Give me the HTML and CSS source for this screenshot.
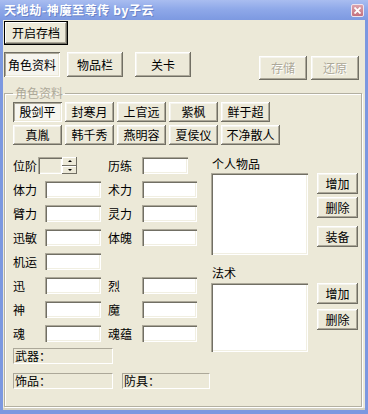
FILE: index.html
```html
<!DOCTYPE html>
<html lang="zh-CN">
<head>
  <meta charset="UTF-8">
  <title>天地劫-神魔至尊传 by子云</title>
  <link rel="stylesheet" href="styles.css">
</head>
<body>

<div class="window">
  <div class="titlebar">
    <span class="title">天地劫-神魔至尊传 by子云</span>
    <span class="close">
      <svg width="7" height="7" viewBox="0 0 7 7"><path d="M0.5 0.5 L6.5 6.5 M6.5 0.5 L0.5 6.5" stroke="#fff" stroke-width="1.8"/></svg>
    </span>
  </div>

  <div class="client">
    <div class="top-row">
      <button class="btn default open-btn">开启存档</button>
    </div>

    <div class="tab-row">
      <div class="tabs">
        <button class="btn tab checked">角色资料</button>
        <button class="btn tab">物品栏</button>
        <button class="btn tab tab-last">关卡</button>
      </div>
      <div class="actions">
        <button class="btn act" disabled>存储</button>
        <button class="btn act" disabled>还原</button>
      </div>
    </div>

    <fieldset class="group">
      <legend>角色资料</legend>

      <div class="chars">
        <div class="char-row">
          <button class="btn char checked">殷剑平</button>
          <button class="btn char">封寒月</button>
          <button class="btn char">上官远</button>
          <button class="btn char">紫枫</button>
          <button class="btn char">鲜于超</button>
        </div>
        <div class="char-row">
          <button class="btn char">真胤</button>
          <button class="btn char">韩千秀</button>
          <button class="btn char">燕明容</button>
          <button class="btn char">夏侯仪</button>
          <button class="btn char wide">不净散人</button>
        </div>
      </div>

      <div class="lower">
        <div class="left-col">
          <div class="form">
            <span class="lbl">位阶</span>
            <div class="spin">
              <span class="spin-edit"></span>
              <span class="spin-btns">
                <span class="spin-up"><i class="tri-up"></i></span>
                <span class="spin-down"><i class="tri-down"></i></span>
              </span>
            </div>
            <span class="lbl lbl-r">历练</span>
            <span class="edit short"></span>

            <span class="lbl">体力</span>
            <span class="edit"></span>
            <span class="lbl lbl-r">术力</span>
            <span class="edit"></span>

            <span class="lbl">臂力</span>
            <span class="edit"></span>
            <span class="lbl lbl-r">灵力</span>
            <span class="edit"></span>

            <span class="lbl">迅敏</span>
            <span class="edit"></span>
            <span class="lbl lbl-r">体魄</span>
            <span class="edit"></span>

            <span class="lbl">机运</span>
            <span class="edit"></span>
            <span></span>
            <span></span>

            <span class="lbl">迅</span>
            <span class="edit"></span>
            <span class="lbl lbl-r">烈</span>
            <span class="edit"></span>

            <span class="lbl">神</span>
            <span class="edit"></span>
            <span class="lbl lbl-r">魔</span>
            <span class="edit"></span>

            <span class="lbl">魂</span>
            <span class="edit"></span>
            <span class="lbl lbl-r">魂蕴</span>
            <span class="edit"></span>
          </div>

          <div class="static weapon">武器：</div>
          <div class="equip-row">
            <div class="static acc">饰品：</div>
            <div class="static armor">防具：</div>
          </div>
        </div>

        <div class="right-col">
          <div class="list-title">个人物品</div>
          <div class="list-row">
            <div class="listbox items"></div>
            <div class="side-btns">
              <button class="btn side">增加</button>
              <button class="btn side">删除</button>
              <button class="btn side equip-btn">装备</button>
            </div>
          </div>

          <div class="list-title spell-title">法术</div>
          <div class="list-row">
            <div class="listbox spells"></div>
            <div class="side-btns">
              <button class="btn side">增加</button>
              <button class="btn side del2">删除</button>
            </div>
          </div>
        </div>
      </div>
    </fieldset>
  </div>
</div>

</body>
</html>
```

FILE: styles.css
```css
body {
  margin: 0;
  font-family: "Noto Sans CJK SC", "Liberation Sans", sans-serif;
  font-size: 12px;
  color: #000;
}

.window {
  width: 368px;
  height: 414px;
  box-sizing: border-box;
  padding: 0 3px 4px 3px;
  background: #7c98e0;
  display: flex;
  flex-direction: column;
}

.titlebar {
  height: 20px;
  margin: 0 -3px;
  padding: 0 4px 0 4px;
  display: flex;
  align-items: center;
  justify-content: space-between;
  background: linear-gradient(to bottom, #a9bdf0 0%, #8fa9e9 45%, #7d99e1 100%);
}

.title {
  color: #fff;
  font-weight: bold;
  font-size: 12px;
  line-height: 14px;
  letter-spacing: 0.6px;
  text-shadow: 1px 1px 0 #6a84c8;
  white-space: pre;
}

.close {
  width: 13px;
  height: 13px;
  box-sizing: border-box;
  border: 1px solid #eee4ee;
  border-radius: 2px;
  background: linear-gradient(to bottom, #dba2ac, #c4717f);
  display: flex;
  align-items: center;
  justify-content: center;
}

.client {
  flex: 1;
  background: #ece9d8;
  padding: 1px 0 0 1px;
  box-shadow: inset 0 -2px 0 #d6d3c4;
}

/* buttons */
.btn {
  font-family: inherit;
  font-size: 12px;
  color: #000;
  background: #ece9d8;
  border: 0;
  padding: 0;
  margin: 0;
  line-height: 14px;
  box-shadow: inset -1px -1px 0 #716f64, inset 1px 1px 0 #fff, inset -2px -2px 0 #aca899, inset 2px 2px 0 #f5f4ee;
}

.btn.default {
  box-shadow: inset 0 0 0 1px #000, inset -2px -2px 0 #716f64, inset 2px 2px 0 #fff, inset -3px -3px 0 #aca899;
}

.btn.checked {
  background: #f6f5ef;
  box-shadow: inset 1px 1px 0 #716f64, inset -1px -1px 0 #fff, inset 2px 2px 0 #aca899, inset -2px -2px 0 #ece9d8;
}

.btn:disabled {
  color: #aca899;
  text-shadow: 1px 1px 0 #fff;
}

.open-btn {
  width: 64px;
  height: 24px;
}

.tab-row {
  margin-top: 7px;
  display: flex;
  justify-content: space-between;
  align-items: flex-start;
}

.tabs {
  display: flex;
  gap: 7px;
}

.tab {
  width: 56px;
  height: 25px;
}

.tab-last {
  margin-left: 5px;
}

.actions {
  margin-top: 4px;
  margin-right: 6px;
  display: flex;
  gap: 4px;
}

.act {
  width: 48px;
  height: 24px;
}

/* group box */
.group {
  margin: 6px 0 0 0;
  width: 358px;
  height: 321px;
  box-sizing: border-box;
  padding: 2px 0 0 8px;
  border: 1px solid #b3b0a1;
  box-shadow: inset 1px 1px 0 #fff, 1px 1px 0 #fff;
  min-width: 0;
}

.group legend {
  padding: 0 2px;
  line-height: 14px;
  color: #aca899;
}

.chars {
  display: flex;
  flex-direction: column;
  gap: 3px;
}

.char-row {
  display: flex;
  gap: 3px;
}

.char {
  width: 49px;
  height: 20px;
}

.char.wide {
  width: 59px;
}

.lower {
  margin-top: 12px;
  display: flex;
}

.left-col {
  width: 198px;
}

.form {
  display: grid;
  grid-template-columns: 32px 56px 41px 55px;
  grid-auto-rows: 17px;
  row-gap: 7px;
}

.lbl {
  line-height: 17px;
  white-space: nowrap;
}

.lbl-r {
  padding-left: 7px;
}

.edit,
.listbox {
  background: #fff;
  box-shadow: inset 1px 1px 0 #aca899, inset 2px 2px 0 #716f64, inset -1px -1px 0 #fff, inset -2px -2px 0 #f1efe2;
}

.edit.short {
  width: 46px;
}

.spin {
  margin-left: -7px;
  display: flex;
}

.spin-edit {
  width: 24px;
  height: 17px;
  background: #ece9d8;
  box-shadow: inset 1px 1px 0 #aca899, inset 2px 2px 0 #716f64, inset -1px -1px 0 #fff, inset -2px -2px 0 #f1efe2;
}

.spin-btns {
  width: 15px;
  height: 17px;
  display: flex;
  flex-direction: column;
}

.spin-up,
.spin-down {
  flex: 1;
  display: flex;
  align-items: center;
  justify-content: center;
  background: #ece9d8;
  box-shadow: inset -1px -1px 0 #716f64, inset 1px 1px 0 #fff;
}

.tri-up {
  width: 0;
  height: 0;
  border-left: 2px solid transparent;
  border-right: 2px solid transparent;
  border-bottom: 2px solid #000;
}

.tri-down {
  width: 0;
  height: 0;
  border-left: 2px solid transparent;
  border-right: 2px solid transparent;
  border-top: 2px solid #000;
}

.static {
  height: 16px;
  box-sizing: border-box;
  line-height: 14px;
  padding-left: 1px;
  border-top: 1px solid #aca899;
  border-left: 1px solid #aca899;
  border-bottom: 1px solid #fff;
  border-right: 1px solid #fff;
}

.weapon {
  margin-top: 6px;
  width: 100px;
}

.equip-row {
  margin-top: 9px;
  display: flex;
  gap: 9px;
}

.acc {
  width: 100px;
}

.armor {
  width: 88px;
}

.right-col {
  width: 148px;
}

.list-title {
  line-height: 14px;
  margin-bottom: 2px;
  padding-left: 1px;
}

.spell-title {
  margin-top: 11px;
  margin-bottom: 3px;
}

.list-row {
  display: flex;
  align-items: flex-start;
}

.listbox {
  width: 97px;
}

.items {
  height: 82px;
}

.spells {
  height: 69px;
}

.side-btns {
  margin-left: 9px;
  display: flex;
  flex-direction: column;
  gap: 3px;
}

.side {
  width: 41px;
  height: 21px;
}

.equip-btn {
  margin-top: 5px;
}

.del2 {
  margin-top: 2px;
}
```
